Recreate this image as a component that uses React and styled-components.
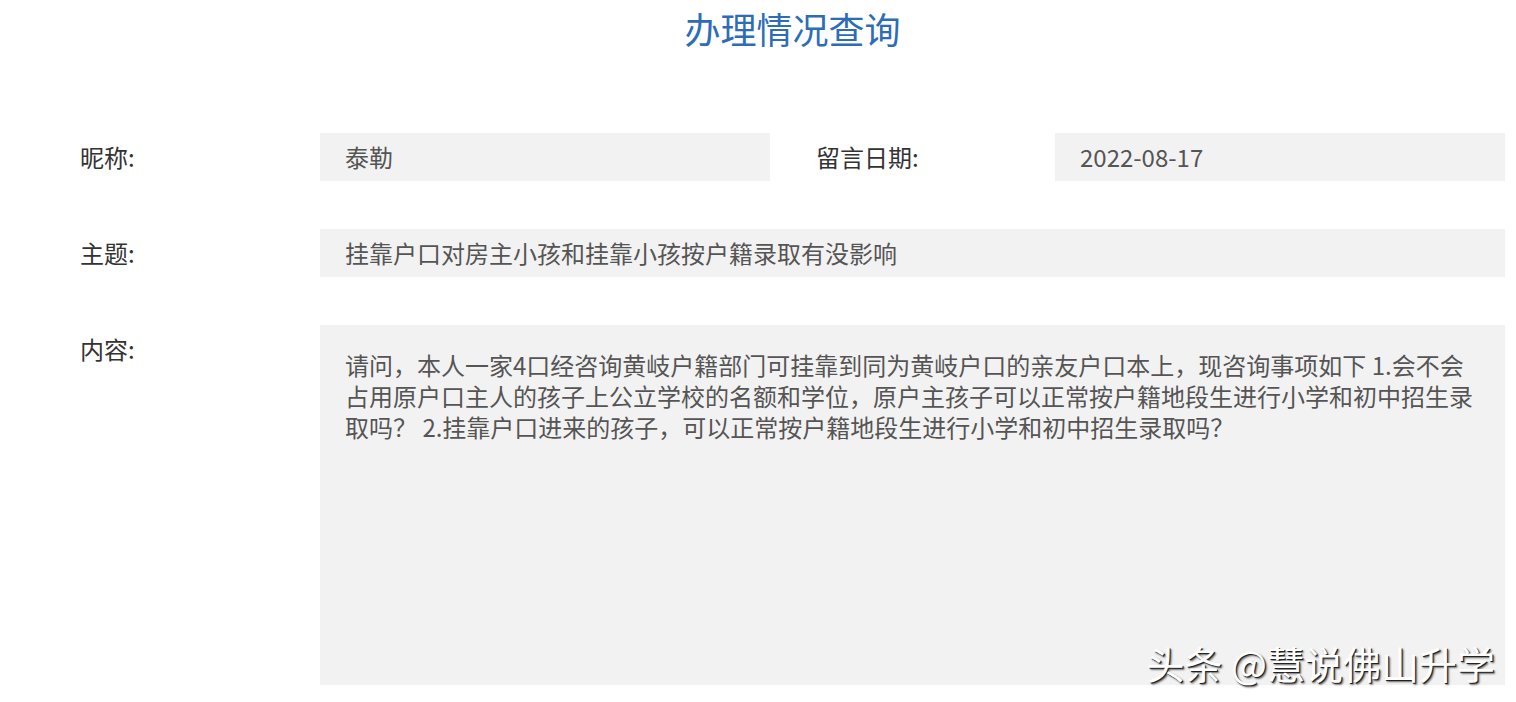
import React from "react";
import styled, { createGlobalStyle } from "styled-components";

const Global = createGlobalStyle`
  html, body { margin: 0; padding: 0; background: #ffffff; }
  body {
    font-family: "Noto Sans CJK SC", "Noto Sans", sans-serif;
    overflow: hidden;
  }
`;

const Page = styled.div`
  width: 1425px;
  height: 702px;
  padding-left: 80px;
  box-sizing: content-box;
`;

const Title = styled.h1`
  margin: 0;
  height: 56px;
  line-height: 56px;
  text-align: center;
  font-size: 36px;
  font-weight: 400;
  color: #2e6db6;
  margin-bottom: 77px;
`;

const Form = styled.div`
  display: grid;
  grid-template-columns: 240px 450px 285px 450px;
  row-gap: 48px;
  align-items: start;
`;

const Label = styled.div`
  font-size: 24px;
  line-height: 48px;
  color: #333333;
  padding-left: ${(p) => (p.$inset ? "46px" : "0")};
  white-space: nowrap;
`;

const Field = styled.div`
  grid-column: ${(p) => (p.$wide ? "2 / 5" : "auto")};
  background: #f2f2f2;
  color: #555555;
  font-size: 24px;
  line-height: 48px;
  height: 48px;
  padding-left: 25px;
  box-sizing: border-box;
  white-space: nowrap;
`;

const ContentBox = styled.div`
  grid-column: 2 / 5;
  position: relative;
  background: #f2f2f2;
  color: #555555;
  font-size: 24px;
  line-height: 31px;
  height: 360px;
  padding: 24px 20px 0 25px;
  box-sizing: border-box;
  white-space: nowrap;
`;

const Watermark = styled.div`
  position: absolute;
  right: 10px;
  bottom: 3px;
  font-size: 38px;
  line-height: 1;
  color: #ffffff;
  text-shadow: 1px 1px 0 #222, 2px 2px 2px rgba(0, 0, 0, 0.6);
  white-space: nowrap;
`;

export default function App() {
  return (
    <>
      <Global />
      <Page>
        <Title>办理情况查询</Title>
        <Form>
          <Label>昵称:</Label>
          <Field>泰勒</Field>
          <Label $inset>留言日期:</Label>
          <Field>2022-08-17</Field>

          <Label>主题:</Label>
          <Field $wide>挂靠户口对房主小孩和挂靠小孩按户籍录取有没影响</Field>

          <Label>内容:</Label>
          <ContentBox>
            请问，本人一家4口经咨询黄岐户籍部门可挂靠到同为黄岐户口的亲友户口本上，现咨询事项如下 1.会不会
            <br />
            占用原户口主人的孩子上公立学校的名额和学位，原户主孩子可以正常按户籍地段生进行小学和初中招生录
            <br />
            取吗？ 2.挂靠户口进来的孩子，可以正常按户籍地段生进行小学和初中招生录取吗？
            <Watermark>头条 @慧说佛山升学</Watermark>
          </ContentBox>
        </Form>
      </Page>
    </>
  );
}
